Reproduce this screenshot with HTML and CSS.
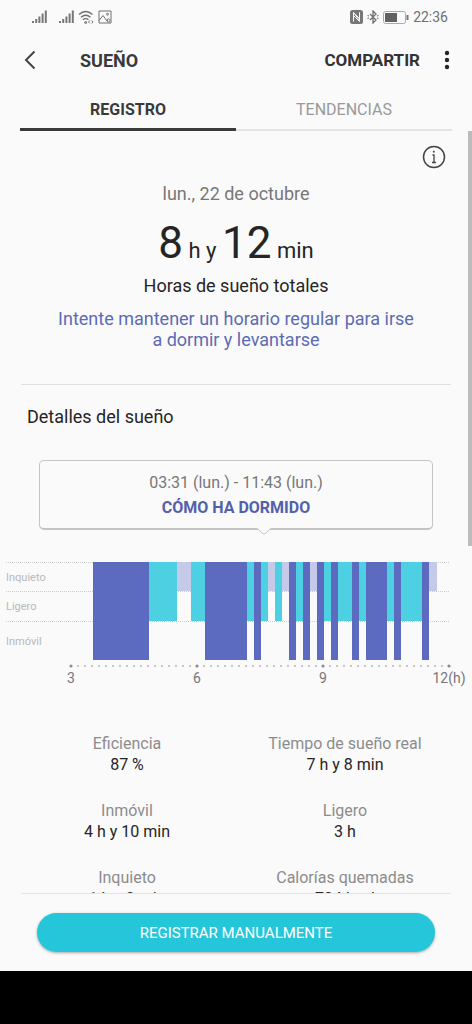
FILE: index.html
```html
<!DOCTYPE html>
<html lang="es">
<head>
<meta charset="utf-8">
<meta name="viewport" content="width=device-width, initial-scale=1">
<title>Sueño</title>
<link rel="stylesheet" href="styles.css">
</head>
<body>
<div class="status">
  <div class="status-group">
    <svg class="signal" width="15" height="14" viewBox="0 0 15 14"><path d="M1 11v2M4.200 9v4M7.400 6.500v6.500M10.600 3.500v9.500M13.800 0.500v12.500"/></svg>
    <svg class="signal second" width="15" height="14" viewBox="0 0 15 14"><path d="M1 11v2M4.200 9v4M7.400 6.500v6.500M10.600 3.500v9.500M13.800 0.500v12.500"/></svg>
    <svg class="line-icon" width="16" height="14" viewBox="0 0 16 14"><path d="M1 4.500Q7.500-1.500 14.500 4.500M3 7.200q4.700-4 9.500 0M5 9.800q2.700-2.300 5.500-.2" stroke-width="1.400"/><path d="M6.800 11.800h1.800v1.400H6.800zM11.800 10.500l-1.300 1.500 1.300 1.300M13.800 10.500l1.200 1.500-1.200 1.300"/></svg>
    <svg class="line-icon picture" width="14" height="14" viewBox="0 0 14 14"><path d="M1 1h12v12H1zM1 10.500l4-5 4 5.500 1-1"/><circle cx="9.500" cy="4.200" r="1"/><circle cx="10.500" cy="10.500" r="1.500"/></svg>
  </div>
  <div class="status-group right">
    <svg width="13" height="14" viewBox="0 0 13 14"><rect width="13" height="14" rx="2.500" fill="#777"/><path d="M3.500 11.500v-9l6 8V2.500M3.500 2.500l6 6M3.500 5.500l6 6v-9" fill="none" stroke="#fafafa"/></svg>
    <svg class="line-icon" width="12" height="14" viewBox="0 0 12 14"><path d="M3 4l6 6-3 3V1l3 3-6 6M.5 5.500l1.500.5M.5 8.500l1.500-.5M10 6l1.500-.5M10 8l1.500.5" stroke-width="1.300"/></svg>
    <svg class="battery" width="26" height="13" viewBox="0 0 26 13"><rect x=".5" y=".5" width="22" height="12" rx="2" fill="none" stroke="#aaa"/><rect x="2" y="2" width="12" height="9" fill="#626262"/><path d="M24.500 4v5" stroke="#777" stroke-width="2"/></svg>
    <time>22:36</time>
  </div>
</div>

<header class="bar">
  <button class="icon-button back" type="button" aria-label="Atrás"><svg width="12" height="20" viewBox="0 0 12 20"><path d="M10.500 1.500L2 10l8.500 8.500" fill="none" stroke="#444" stroke-width="2"/></svg></button>
  <h1>SUEÑO</h1>
  <button class="share" type="button">COMPARTIR</button>
  <button class="icon-button" type="button" aria-label="Más opciones"><svg width="6" height="20" viewBox="0 0 6 20" fill="#252525"><circle cx="3" cy="3" r="2.200"/><circle cx="3" cy="10" r="2.200"/><circle cx="3" cy="17" r="2.200"/></svg></button>
</header>

<nav class="tabs">
  <button class="tab active" type="button">REGISTRO</button>
  <button class="tab" type="button">TENDENCIAS</button>
</nav>

<main class="scroll">
  <div class="info-row">
    <button class="icon-button" type="button" aria-label="Información"><svg width="24" height="24" viewBox="0 0 24 24"><circle cx="12" cy="12" r="10.500" fill="none" stroke="#444" stroke-width="1.500"/><path d="M10.500 10H12v7.500M10 17.500h4" fill="none" stroke="#444" stroke-width="1.300"/><circle cx="11.800" cy="6.800" r="1" fill="#444"/></svg></button>
  </div>
  <section class="summary">
    <p class="date">lun., 22 de octubre</p>
    <p class="total"><span class="big">8</span> h y <span class="big">12</span> min</p>
    <p class="caption">Horas de sueño totales</p>
    <p class="advice">Intente mantener un horario regular para irse a dormir y levantarse</p>
  </section>

  <section class="details">
    <h2>Detalles del sueño</h2>
    <div class="bubble">
      <p>03:31 (lun.) - 11:43 (lun.)</p>
      <button class="how" type="button">CÓMO HA DORMIDO</button>
      <svg class="pointer" width="16" height="7" viewBox="0 0 16 7"><path d="M0 0h16v1h-1.500L9.500 5.400q-1.500 1-3 0L1.500 1H0z" fill="#fafafa"/><path d="M0 .5h1.500l5 4.800q1.500 1 3 0l5-4.800H16" fill="none" stroke="#c4c4c4"/></svg>
    </div>

    <div class="chart">
      <div class="rows">
        <div class="row restless-row">Inquieto</div>
        <div class="row light-row">Ligero</div>
        <div class="row deep-row">Inmóvil</div>
      </div>
      <div class="plot">
        <span class="gap" style="flex-grow:3.1"></span>
        <span class="deep" style="flex-grow:8"></span>
        <span class="light" style="flex-grow:4"></span>
        <span class="restless" style="flex-grow:2"></span>
        <span class="light" style="flex-grow:2"></span>
        <span class="deep" style="flex-grow:6"></span>
        <span class="light"></span>
        <span class="deep"></span>
        <span class="light"></span>
        <span class="restless"></span>
        <span class="light"></span>
        <span class="restless"></span>
        <span class="deep"></span>
        <span class="light"></span>
        <span class="deep"></span>
        <span class="restless"></span>
        <span class="deep"></span>
        <span class="light"></span>
        <span class="deep"></span>
        <span class="light" style="flex-grow:2"></span>
        <span class="deep"></span>
        <span class="light"></span>
        <span class="deep" style="flex-grow:3"></span>
        <span class="light"></span>
        <span class="deep"></span>
        <span class="light" style="flex-grow:3"></span>
        <span class="deep"></span>
        <span class="restless" style="flex-grow:1.2"></span>
        <span class="gap" style="flex-grow:1.7"></span>
      </div>
    </div>
    <div class="axis">
      <svg class="dots" width="100%" height="4"><line x1="0" y1="2" x2="100%" y2="2" pathLength="54" stroke="#b4b4b4" stroke-width="2" stroke-linecap="round" stroke-dasharray="0 1"/><g fill="#8c8c8c"><circle cx="0" cy="2" r="1.600"/><circle cx="33.333%" cy="2" r="1.600"/><circle cx="66.667%" cy="2" r="1.600"/><circle cx="100%" cy="2" r="1.600"/></g></svg>
      <div class="ticks"><span>3</span><span>6</span><span>9</span><span>12(h)</span></div>
    </div>

    <dl class="stats">
      <div><dt>Eficiencia</dt><dd>87 %</dd></div>
      <div><dt>Tiempo de sueño real</dt><dd>7 h y 8 min</dd></div>
      <div><dt>Inmóvil</dt><dd>4 h y 10 min</dd></div>
      <div><dt>Ligero</dt><dd>3 h</dd></div>
      <div><dt>Inquieto</dt><dd>1 h y 2 min</dd></div>
      <div><dt>Calorías quemadas</dt><dd>704 kcal</dd></div>
    </dl>
  </section>
  <div class="thumb"></div>
</main>

<footer class="footer">
  <button class="primary" type="button">REGISTRAR MANUALMENTE</button>
</footer>
<div class="system-nav"></div>
</body>
</html>
```
FILE: styles.css
```css
* { box-sizing: border-box; }
body {
  margin: 0;
  height: 100vh;
  display: flex;
  flex-direction: column;
  background: #fafafa;
  color: #252525;
  font-family: Roboto, "Liberation Sans", sans-serif;
  font-size: 16px;
  line-height: 21px;
}
p, h1, h2, dl, dd { margin: 0; }
button {
  border: 0;
  padding: 0;
  background: none;
  font: inherit;
  color: inherit;
}
svg { display: block; flex: none; }

.status {
  flex: none;
  height: 34px;
  padding: 0 24px 0 32px;
  display: flex;
  align-items: center;
  justify-content: space-between;
  color: #707070;
  font-size: 14px;
}
.status-group { display: flex; align-items: center; gap: 4px; }
.signal { fill: none; stroke: #777; stroke-width: 2; }
.second { margin-left: 8px; }
.line-icon { fill: none; stroke: #707070; stroke-width: 1; }

.bar {
  flex: none;
  height: 52px;
  padding: 0 22px 0 24px;
  display: flex;
  align-items: center;
}
.icon-button { display: flex; }
.bar h1 { margin-left: 44px; font-size: 18px; font-weight: 700; color: #3a3a3a; }
.share { margin: 0 24px 0 auto; font-size: 17px; font-weight: 700; color: #333; }

.tabs { flex: none; display: flex; height: 45px; padding: 0 20px; }
.tab {
  flex: 1;
  padding-top: 4px;
  border-bottom: 2px solid #e4e4e4;
  color: #999;
}
.tab.active { border-bottom: 3px solid #3a3a3a; color: #3a3a3a; font-weight: 700; }

.scroll { flex: 1; min-height: 0; position: relative; overflow: hidden; }
.thumb {
  position: absolute;
  top: 0;
  right: 0;
  width: 4px;
  height: 415px;
  background: #bcbcbc;
}
.info-row { display: flex; justify-content: flex-end; padding: 14px 26px 0; }
.summary {
  margin: 0 21px;
  padding: 14px 30px 34px;
  border-bottom: 1px solid #e0e0e0;
  text-align: center;
  font-size: 18px;
}
.date { color: #777; }
.total { margin-top: 15px; font-size: 22px; line-height: 49px; }
.big { font-size: 44px; }
.advice { margin-top: 12px; color: #5c6bb4; }

.details h2 { margin: 21px 27px 0; font-size: 18px; font-weight: 400; }
.bubble {
  position: relative;
  margin: 33px 39px 0;
  height: 70px;
  display: flex;
  flex-direction: column;
  align-items: center;
  justify-content: center;
  gap: 4px;
  border: 1px solid #c4c4c4;
  border-bottom-width: 2px;
  border-radius: 5px;
  color: #777;
}
.how { color: #5360ab; font-weight: 700; }
.pointer { position: absolute; top: 67px; left: 55%; }

.chart { position: relative; margin-top: 32px; }
.rows { margin: 0 23px 0 6px; color: #b8b8b8; font-size: 11px; }
.row { display: flex; align-items: center; border-top: 1px dotted #ccc; }
.restless-row { height: 29px; }
.light-row { height: 30px; }
.deep-row { height: 39px; }
.plot {
  position: absolute;
  inset: 0 23px 0 71px;
  display: flex;
  align-items: flex-start;
}
.plot span { flex: 1 1 0; }
.plot .deep { height: 98px; background: #5c6bc0; }
.plot .light { height: 59px; background: #4dd0e1; }
.plot .restless { height: 29px; background: #c5cae9; }
.axis { margin: 4px 23px 0 71px; }
.dots { overflow: visible; }
.ticks {
  display: flex;
  justify-content: space-between;
  color: #777;
  font-size: 14px;
  line-height: 20px;
}
.ticks span { display: flex; width: 0; justify-content: center; }

.stats {
  margin: 45px 18px 0;
  display: grid;
  grid-template-columns: 1fr 1fr;
  row-gap: 25px;
  text-align: center;
}
.stats dt { color: #8c8c8c; }

.footer { flex: none; height: 78px; margin: 0 21px; padding: 19px 16px; border-top: 1px solid #e4e4e4; }
.primary {
  width: 100%;
  height: 39px;
  padding-top: 2px;
  border-radius: 20px;
  background: #26c6da;
  box-shadow: 0 1px 3px #0005;
  color: #fff;
  font-size: 15px;
}
.system-nav { flex: none; height: 53px; background: #000; }
```
